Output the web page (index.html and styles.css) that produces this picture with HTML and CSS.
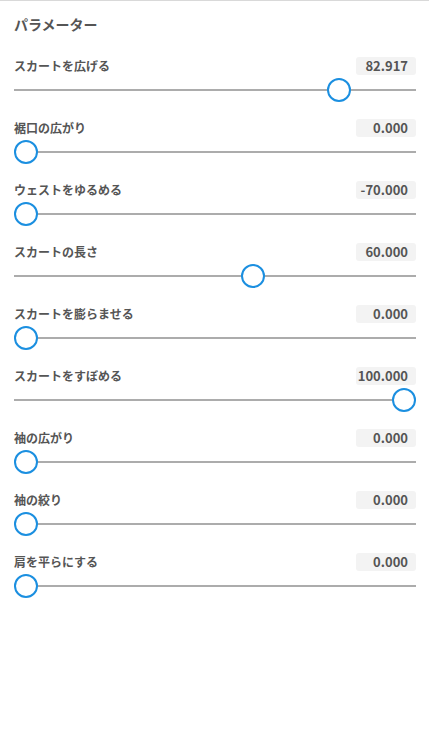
FILE: index.html
```html
<!DOCTYPE html>
<html lang="ja">
<head>
<meta charset="utf-8">
<title>パラメーター</title>
<link rel="stylesheet" href="styles.css">
</head>
<body>
<div class="panel">
  <h2 class="title">パラメーター</h2>
  <div class="params">
    <div class="param">
      <div class="head"><span class="label">スカートを広げる</span><span class="value">82.917</span></div>
      <div class="slider"><div class="track"></div><div class="thumb" style="--p:0.82917"></div></div>
    </div>
    <div class="param">
      <div class="head"><span class="label">裾口の広がり</span><span class="value">0.000</span></div>
      <div class="slider"><div class="track"></div><div class="thumb" style="--p:0"></div></div>
    </div>
    <div class="param">
      <div class="head"><span class="label">ウェストをゆるめる</span><span class="value">-70.000</span></div>
      <div class="slider"><div class="track"></div><div class="thumb" style="--p:0"></div></div>
    </div>
    <div class="param">
      <div class="head"><span class="label">スカートの長さ</span><span class="value">60.000</span></div>
      <div class="slider"><div class="track"></div><div class="thumb" style="--p:0.6"></div></div>
    </div>
    <div class="param">
      <div class="head"><span class="label">スカートを膨らませる</span><span class="value">0.000</span></div>
      <div class="slider"><div class="track"></div><div class="thumb" style="--p:0"></div></div>
    </div>
    <div class="param">
      <div class="head"><span class="label">スカートをすぼめる</span><span class="value">100.000</span></div>
      <div class="slider"><div class="track"></div><div class="thumb" style="--p:1"></div></div>
    </div>
    <div class="param">
      <div class="head"><span class="label">袖の広がり</span><span class="value">0.000</span></div>
      <div class="slider"><div class="track"></div><div class="thumb" style="--p:0"></div></div>
    </div>
    <div class="param">
      <div class="head"><span class="label">袖の絞り</span><span class="value">0.000</span></div>
      <div class="slider"><div class="track"></div><div class="thumb" style="--p:0"></div></div>
    </div>
    <div class="param">
      <div class="head"><span class="label">肩を平らにする</span><span class="value">0.000</span></div>
      <div class="slider"><div class="track"></div><div class="thumb" style="--p:0"></div></div>
    </div>
  </div>
</div>
</body>
</html>
```
FILE: styles.css
```css
html, body {
  margin: 0;
  padding: 0;
  background: #fff;
}
body {
  font-family: "Noto Sans CJK JP", "Noto Sans", sans-serif;
  color: #555;
}
.panel {
  border-top: 1px solid #d9d9d9;
  padding: 13px 13px 0 14px;
}
.title {
  margin: 0 0 23px 0;
  font-size: 14px;
  line-height: 20px;
  font-weight: 700;
  color: #555;
}
.params {
  display: flex;
  flex-direction: column;
  gap: 17px;
}
.param {
  display: flex;
  flex-direction: column;
  gap: 3px;
}
.head {
  display: flex;
  justify-content: space-between;
  align-items: center;
  height: 18px;
}
.label {
  font-size: 12px;
  font-weight: 700;
  line-height: 18px;
  color: #555;
}
.value {
  box-sizing: border-box;
  width: 60px;
  height: 18px;
  line-height: 18px;
  padding-right: 8px;
  text-align: right;
  background: #f3f3f3;
  border-radius: 3px;
  font-size: 13px;
  font-weight: 600;
  color: #555;
}
.slider {
  position: relative;
  height: 24px;
}
.track {
  position: absolute;
  left: 0;
  right: 0;
  top: 11px;
  height: 2px;
  background: #acacac;
}
.thumb {
  position: absolute;
  top: 0;
  left: calc(var(--p) * (100% - 24px));
  box-sizing: border-box;
  width: 24px;
  height: 24px;
  border-radius: 50%;
  border: 2px solid #1b8fe0;
  background: #fff;
}
```
